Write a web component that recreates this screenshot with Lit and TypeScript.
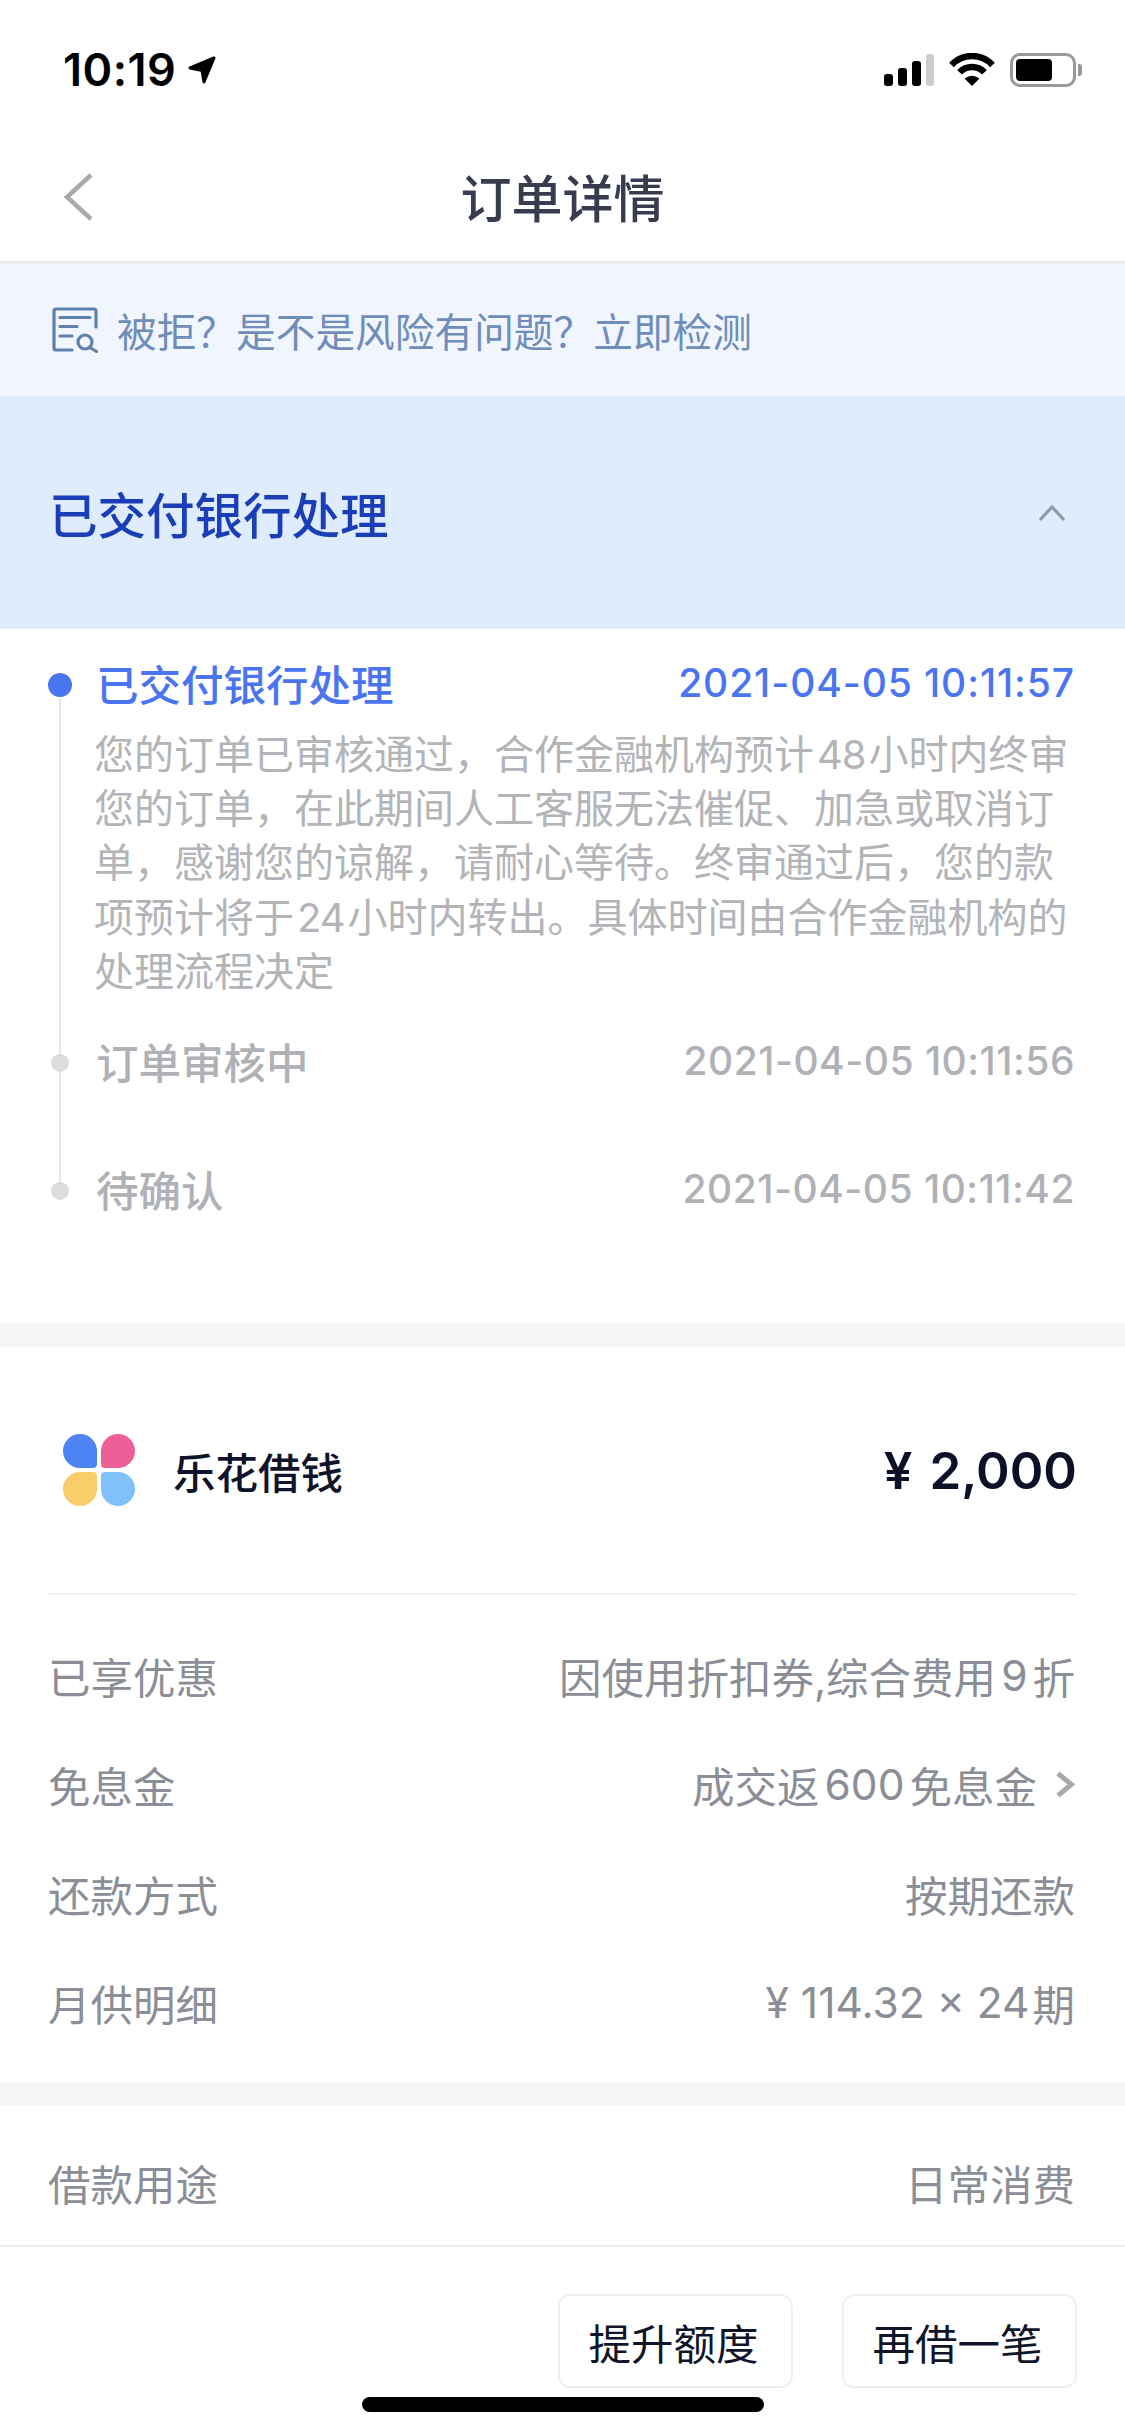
import { LitElement, css, html, svg } from 'lit';

interface DetailRow {
  label: unknown;
  value: unknown;
  link?: boolean;
}

const rows: DetailRow[] = [
  { label: '已享优惠', value: html`因使用折扣券,综合费用<span class="num">9</span>折` },
  { label: '免息金', value: html`成交返<span class="num">600</span>免息金`, link: true },
  { label: '还款方式', value: '按期还款' },
  { label: '月供明细', value: html`¥ 114.32 × 24<span class="tail">期</span>` }
];

const signalIcon = svg`
  <rect x="0" y="20" width="9" height="12" rx="3" fill="#000" />
  <rect x="14" y="14" width="9" height="18" rx="3" fill="#000" />
  <rect x="28" y="7" width="9" height="25" rx="3" fill="#000" />
  <rect x="42" y="0" width="8" height="32" rx="3" fill="#ccc" />
`;

const wifiIcon = svg`
  <path d="M2.5 12A28 28 0 0 1 43.5 12" fill="none" stroke="#000" stroke-width="6.5" />
  <path d="M10.6 19.4A17 17 0 0 1 35.4 19.4" fill="none" stroke="#000" stroke-width="6.5" />
  <path d="M23 33L15.5 25.5Q23 20 30.5 25.5Z" fill="#000" />
`;

export class AppRoot extends LitElement {
  public static override styles = css`
    :host {
      display: block;
      position: relative;
      width: 1125px;
      height: 2436px;
      overflow: hidden;
      background: #fff;
      font-family: Inter, 'Noto Sans CJK SC', sans-serif;
    }

    .status {
      display: flex;
      align-items: center;
      justify-content: space-between;
      height: 139px;
      padding: 0 43px 0 63px;
      box-sizing: border-box;
    }

    .clock {
      display: flex;
      align-items: center;
      gap: 11px;
      font-size: 45px;
      font-weight: 600;
      letter-spacing: 0.5px;
      color: #000;
    }

    .indicators {
      display: flex;
      align-items: center;
      gap: 15px;
    }

    .battery {
      display: flex;
      align-items: center;
      gap: 2px;
    }

    .battery-body {
      display: flex;
      width: 66px;
      height: 34px;
      padding: 3px;
      box-sizing: border-box;
      border: 3px solid #999;
      border-radius: 10px;
    }

    .battery-fill {
      width: 36px;
      background: #000;
      border-radius: 4px;
    }

    .battery-cap {
      width: 4px;
      height: 12px;
      background: #999;
      border-radius: 0 3px 3px 0;
    }

    .nav {
      position: relative;
      display: flex;
      align-items: center;
      justify-content: center;
      height: 124px;
      padding-bottom: 8px;
      box-sizing: border-box;
      border-bottom: 2px solid #ebebeb;
    }

    .back {
      position: absolute;
      left: 62px;
      top: 33px;
    }

    .title {
      font-size: 51px;
      font-weight: 500;
      color: #373c4e;
    }

    .banner {
      display: flex;
      align-items: center;
      gap: 19px;
      height: 133px;
      padding-left: 52px;
      background: #f0f5fe;
      color: #6f8db8;
      font-size: 39.7px;
    }

    .state {
      display: flex;
      align-items: center;
      justify-content: space-between;
      height: 233px;
      padding: 0 59px 0 49px;
      background: #deecfd;
      color: #1a3eb8;
      font-size: 48.5px;
      font-weight: 500;
    }

    .timeline {
      position: relative;
      height: 694px;
      padding: 32px 50px 0 48px;
      box-sizing: border-box;
    }

    .rail {
      position: absolute;
      left: 59px;
      top: 70px;
      width: 1.5px;
      height: 490px;
      background: #e6e6e6;
    }

    .step {
      display: grid;
      grid-template-columns: 46px 1fr;
    }

    .step-head {
      display: flex;
      align-items: center;
      justify-content: space-between;
      height: 42px;
    }

    .step-name {
      font-size: 42.5px;
      font-weight: 500;
      color: #b0b1b6;
      margin-left: 2px;
    }

    .step-time {
      font-size: 39px;
      font-weight: 500;
      letter-spacing: 0.5px;
      color: #b0b1b6;
    }

    .dot {
      width: 18px;
      height: 18px;
      margin: 15px 0 0 3px;
      border-radius: 50%;
      background: #dcdcdc;
      position: relative;
    }

    .step.active .dot {
      width: 24px;
      height: 24px;
      margin: 12px 0 0;
      background: #4a77f0;
    }

    .step.active .step-name,
    .step.active .step-time {
      color: #4a74f0;
    }

    .step.active .step-time {
      letter-spacing: 0.9px;
    }

    .step-desc {
      margin: 25px 0 40px;
      font-size: 40px;
      line-height: 54.2px;
      color: #b3b4b8;
    }

    .step-desc .num {
      margin: 0 3px;
      letter-spacing: -1px;
    }

    .step.review {
      padding-bottom: 86px;
    }

    .gap {
      background: #f6f6f6;
    }

    .gap.lg {
      height: 24px;
    }

    .gap.sm {
      height: 23px;
    }

    .product {
      display: flex;
      align-items: center;
      justify-content: space-between;
      height: 246px;
      margin: 0 48px;
      border-bottom: 2px solid #efefef;
    }

    .brand {
      display: flex;
      align-items: center;
      gap: 38px;
      padding-left: 15px;
      font-size: 42.5px;
      font-weight: 500;
      color: #10142a;
    }

    .logo {
      display: grid;
      grid-template-columns: 34px 34px;
      gap: 4px;
    }

    .logo i {
      display: block;
      height: 34px;
      border-radius: 50%;
    }

    .logo .a {
      background: #4e83f6;
      border-bottom-right-radius: 4px;
    }

    .logo .b {
      background: #ec6097;
      border-bottom-left-radius: 4px;
    }

    .logo .c {
      background: #f8cd6a;
      border-top-right-radius: 4px;
    }

    .logo .d {
      background: #80c1fa;
      border-top-left-radius: 4px;
    }

    .amount {
      font-size: 51px;
      font-weight: 600;
      word-spacing: 4px;
      color: #0d1128;
    }

    .details {
      padding: 26px 50px 25px 48px;
    }

    .row {
      display: flex;
      align-items: center;
      justify-content: space-between;
      height: 109px;
      font-size: 42.5px;
      color: #8b8e96;
    }

    .value {
      display: flex;
      align-items: center;
    }

    .value .num {
      margin: 0 5px;
    }

    .value .tail {
      margin-left: 3px;
    }

    .value svg {
      margin-left: 18px;
    }

    .purpose {
      padding: 23px 50px 8px 48px;
      border-bottom: 2px solid #eee;
    }

    .actions {
      display: flex;
      justify-content: flex-end;
      gap: 49px;
      padding: 47px 48px 0 0;
    }

    .btn {
      display: flex;
      align-items: center;
      justify-content: center;
      width: 235px;
      height: 94px;
      box-sizing: border-box;
      border: 2px solid #f0f0f0;
      border-radius: 12px;
      background: #fff;
      font-size: 42.5px;
      color: #11152a;
      font-family: inherit;
      padding: 0 4px 0 0;
    }

    .home {
      position: absolute;
      left: 362px;
      top: 2397px;
      width: 402px;
      height: 15px;
      border-radius: 8px;
      background: #000;
    }
  `;

  private renderRow(row: DetailRow) {
    return html`
      <div class="row">
        <span>${row.label}</span>
        <span class="value">
          ${row.value}
          ${row.link
            ? html`<svg width="20" height="27" viewBox="0 0 20 27">
                <path d="M3 2.5L16.5 13.5L3 24.5" fill="none" stroke="#aaa" stroke-width="5" />
              </svg>`
            : null}
        </span>
      </div>
    `;
  }

  public override render() {
    return html`
      <div class="status">
        <div class="clock">
          10:19
          <svg width="30" height="30" viewBox="0 0 30 30">
            <path d="M27 3L3 13L15 15.5L17 27Z" fill="#000" stroke="#000" stroke-width="3" stroke-linejoin="round" />
          </svg>
        </div>
        <div class="indicators">
          <svg width="50" height="32" viewBox="0 0 50 32">${signalIcon}</svg>
          <svg width="46" height="33" viewBox="0 0 46 33">${wifiIcon}</svg>
          <div class="battery">
            <div class="battery-body"><div class="battery-fill"></div></div>
            <div class="battery-cap"></div>
          </div>
        </div>
      </div>

      <div class="nav">
        <svg class="back" width="32" height="50" viewBox="0 0 32 50">
          <path d="M29 3L5 25L29 47" fill="none" stroke="#aaa" stroke-width="4.5" />
        </svg>
        <div class="title">订单详情</div>
      </div>

      <div class="banner">
        <svg width="46" height="46" viewBox="0 0 46 46" fill="none" stroke="#5f80ad" stroke-width="3.2" stroke-linecap="round">
          <path d="M44 20V4a2 2 0 0 0-2-2H4a2 2 0 0 0-2 2V41a2 2 0 0 0 2 2H20" />
          <path d="M8 10.5H38M8 19.5H25M8 29H20" />
          <circle cx="33" cy="35" r="7" />
          <path d="M38 40.5L44.5 44.5" />
        </svg>
        <span>被拒&#xFF1F;是不是风险有问题&#xFF1F;立即检测</span>
      </div>

      <div class="state">
        <span>已交付银行处理</span>
        <svg width="28" height="18" viewBox="0 0 28 18">
          <path d="M2 16L14 3L26 16" fill="none" stroke="#8e99a8" stroke-width="3.2" />
        </svg>
      </div>

      <div class="timeline">
        <div class="rail"></div>
        <div class="step active">
          <div class="dot"></div>
          <div>
            <div class="step-head">
              <span class="step-name">已交付银行处理</span>
              <span class="step-time">2021-04-05 10:11:57</span>
            </div>
            <div class="step-desc">
              您的订单已审核通过&#xFF0C;合作金融机构预计<span class="num">48</span>小时内终审您的订单&#xFF0C;在此期间人工客服无法催促、加急或取消订单&#xFF0C;感谢您的谅解&#xFF0C;请耐心等待。终审通过后&#xFF0C;您的款项预计将于<span class="num">24</span>小时内转出。具体时间由合作金融机构的处理流程决定
            </div>
          </div>
        </div>
        <div class="step review">
          <div class="dot"></div>
          <div class="step-head">
            <span class="step-name">订单审核中</span>
            <span class="step-time">2021-04-05 10:11:56</span>
          </div>
        </div>
        <div class="step">
          <div class="dot"></div>
          <div class="step-head">
            <span class="step-name">待确认</span>
            <span class="step-time">2021-04-05 10:11:42</span>
          </div>
        </div>
      </div>

      <div class="gap lg"></div>

      <div class="product">
        <div class="brand">
          <div class="logo"><i class="a"></i><i class="b"></i><i class="c"></i><i class="d"></i></div>
          <span>乐花借钱</span>
        </div>
        <div class="amount">¥ 2,000</div>
      </div>

      <div class="details">${rows.map((row) => this.renderRow(row))}</div>

      <div class="gap sm"></div>

      <div class="purpose">${this.renderRow({ label: '借款用途', value: '日常消费' })}</div>

      <div class="actions">
        <button class="btn">提升额度</button>
        <button class="btn">再借一笔</button>
      </div>

      <div class="home"></div>
    `;
  }
}

if (!customElements.get('app-root')) {
  customElements.define('app-root', AppRoot);
}
